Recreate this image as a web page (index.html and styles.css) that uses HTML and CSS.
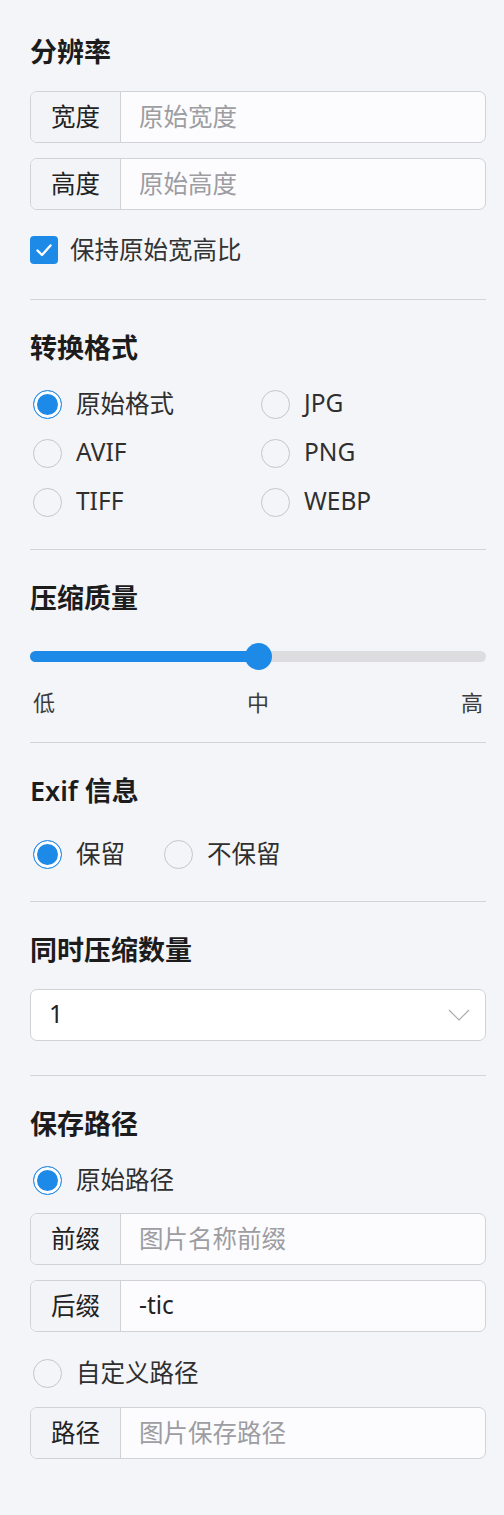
FILE: index.html
```html
<!DOCTYPE html>
<html lang="zh-CN">
<head>
<meta charset="utf-8">
<title>设置</title>
<link rel="stylesheet" href="styles.css">
</head>
<body>
<main class="panel">
  <section class="section sec-res">
    <h2 class="title">分辨率</h2>
    <div class="stack">
      <div class="field"><span class="addon">宽度</span><span class="input placeholder">原始宽度</span></div>
      <div class="field"><span class="addon">高度</span><span class="input placeholder">原始高度</span></div>
    </div>
    <label class="check-row">
      <span class="checkbox"><svg viewBox="0 0 28 28" width="28" height="28"><path d="M7.5 14.5 L12 19 L20.5 9.5" fill="none" stroke="#fff" stroke-width="2.4" stroke-linecap="round" stroke-linejoin="round"/></svg></span>
      <span class="check-text">保持原始宽高比</span>
    </label>
  </section>

  <section class="section sec-fmt">
    <h2 class="title">转换格式</h2>
    <div class="radio-grid">
      <label class="radio-row"><span class="radio checked"></span><span class="radio-text">原始格式</span></label>
      <label class="radio-row"><span class="radio"></span><span class="radio-text">JPG</span></label>
      <label class="radio-row"><span class="radio"></span><span class="radio-text">AVIF</span></label>
      <label class="radio-row"><span class="radio"></span><span class="radio-text">PNG</span></label>
      <label class="radio-row"><span class="radio"></span><span class="radio-text">TIFF</span></label>
      <label class="radio-row"><span class="radio"></span><span class="radio-text">WEBP</span></label>
    </div>
  </section>

  <section class="section sec-quality">
    <h2 class="title">压缩质量</h2>
    <div class="slider">
      <div class="track">
        <div class="fill" style="width:50%"></div>
        <span class="thumb" style="left:50%"></span>
      </div>
    </div>
    <div class="scale"><span>低</span><span>中</span><span>高</span></div>
  </section>

  <section class="section sec-exif">
    <h2 class="title">Exif 信息</h2>
    <div class="radio-inline">
      <label class="radio-row"><span class="radio checked"></span><span class="radio-text">保留</span></label>
      <label class="radio-row"><span class="radio"></span><span class="radio-text">不保留</span></label>
    </div>
  </section>

  <section class="section sec-count">
    <h2 class="title">同时压缩数量</h2>
    <div class="select">
      <span class="select-value">1</span>
      <svg class="chevron" viewBox="0 0 22 12" width="22" height="12"><polyline points="1,1 11,11 21,1" fill="none" stroke="#a8a8ad" stroke-width="1.1"/></svg>
    </div>
  </section>

  <section class="section sec-path last">
    <h2 class="title">保存路径</h2>
    <label class="radio-row"><span class="radio checked"></span><span class="radio-text">原始路径</span></label>
    <div class="stack stack-path">
      <div class="field"><span class="addon">前缀</span><span class="input placeholder">图片名称前缀</span></div>
      <div class="field"><span class="addon">后缀</span><span class="input value">-tic</span></div>
    </div>
    <label class="radio-row custom-row"><span class="radio"></span><span class="radio-text">自定义路径</span></label>
    <div class="field field-last"><span class="addon">路径</span><span class="input placeholder">图片保存路径</span></div>
  </section>
</main>
</body>
</html>
```

FILE: styles.css
```css
* { box-sizing: border-box; }

html, body {
  margin: 0;
  padding: 0;
  background: #f4f5f9;
}

body {
  font-family: "Noto Sans", "Noto Sans CJK SC", sans-serif;
  color: #2b2b2b;
}

.panel {
  padding: 4px 18px 0 30px;
  display: flex;
  flex-direction: column;
}

.section {
  display: flex;
  flex-direction: column;
  padding-top: 32px;
  padding-bottom: 30px;
  border-bottom: 1px solid #d3d4d8;
}

.section.last {
  border-bottom: none;
  padding-bottom: 56px;
}

.title {
  margin: 0 0 19px 0;
  font-size: 27px;
  line-height: 32px;
  height: 36px;
  padding-bottom: 4px;
  font-weight: 600;
  color: #1c1c1c;
}

/* input groups */
.stack {
  display: flex;
  flex-direction: column;
  gap: 15px;
}

.stack-path {
  margin-top: 16px;
  gap: 15px;
}

.field {
  display: flex;
  height: 52px;
  border: 1px solid #d0d2d7;
  border-radius: 7px;
  overflow: hidden;
  background: #fcfcfe;
}

.addon {
  width: 90px;
  flex: none;
  display: flex;
  align-items: center;
  justify-content: center;
  background: #f3f4f7;
  border-right: 1px solid #d0d2d7;
  font-size: 24.5px;
  padding-bottom: 4px;
  color: #222;
}

.input {
  flex: 1;
  display: flex;
  align-items: center;
  padding-left: 18px;
  padding-bottom: 4px;
  font-size: 24.5px;
}

.placeholder { color: #9d9da2; }
.value { color: #222; }

.field-last { margin-top: 17px; }

/* checkbox */
.check-row {
  display: flex;
  align-items: center;
  height: 34px;
  margin-top: 23px;
  gap: 12px;
}

.sec-res { padding-bottom: 32px; }

.checkbox {
  width: 28px;
  height: 28px;
  border-radius: 4px;
  background: #1e8ae8;
  display: flex;
}

.check-text {
  font-size: 24.5px;
  padding-bottom: 3px;
  color: #333;
}

/* radios */
.radio-grid {
  display: grid;
  grid-template-columns: 1fr 1fr;
  row-gap: 15px;
}

.radio-row {
  display: flex;
  align-items: center;
  height: 34px;
}

.radio {
  width: 29px;
  height: 29px;
  margin-left: 3px;
  margin-right: 14px;
  border-radius: 50%;
  border: 1px solid #c6c6ca;
  flex: none;
}

.radio.checked {
  border-color: #2a8ceb;
  background: #1e8ae8;
  box-shadow: inset 0 0 0 3px #fff;
}

.radio-text {
  font-size: 24.5px;
  padding-bottom: 4px;
  color: #2f2f2f;
}

.radio-inline {
  display: flex;
  margin-top: 7px;
  gap: 36px;
}

.sec-exif .radio-inline .radio-row:first-child .radio-text { width: 49px; }

.custom-row { margin-top: 24px; }

/* slider */
.slider {
  height: 38px;
  display: flex;
  align-items: center;
}

.track {
  position: relative;
  width: 100%;
  height: 11px;
  border-radius: 6px;
  background: #dddddf;
}

.fill {
  height: 100%;
  border-radius: 6px;
  background: #1e8ae8;
}

.thumb {
  position: absolute;
  top: 50%;
  width: 27px;
  height: 27px;
  margin-left: -13.5px;
  margin-top: -13.5px;
  border-radius: 50%;
  background: #1e8ae8;
}

.scale {
  display: flex;
  justify-content: space-between;
  margin-top: 12px;
  line-height: 30px;
  height: 30px;
  padding: 0 3px 4px;
  font-size: 22px;
  color: #3c3c3c;
}

.sec-quality { padding-bottom: 25px; }

/* select */
.select {
  height: 52px;
  display: flex;
  align-items: center;
  justify-content: space-between;
  background: #fff;
  border: 1px solid #d0d2d7;
  border-radius: 7px;
  padding: 0 15px 0 18px;
}

.select-value {
  font-size: 24.5px;
  padding-bottom: 4px;
  color: #222;
}

.sec-count { padding-bottom: 34px; }
```
